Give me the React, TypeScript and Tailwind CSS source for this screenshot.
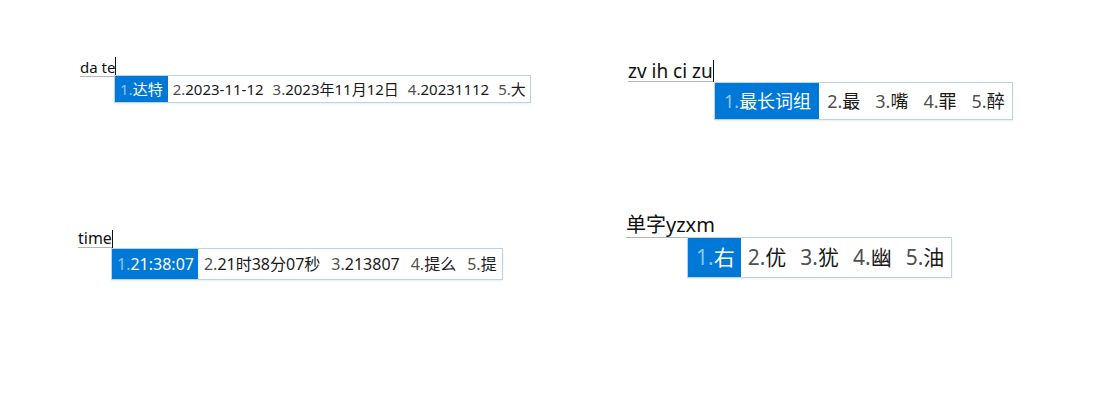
import React from "react";

interface Candidate {
  n: string;
  text: string;
}

interface PanelProps {
  comp: string;
  caret: boolean;
  compClass: string;
  lineClass: string;
  boxClass: string;
  itemClass: string;
  firstClass: string;
  candidates: Candidate[];
}

const font = { fontFamily: '"Noto Sans", "Noto Sans CJK SC", sans-serif' };

function Panel({
  comp,
  caret,
  compClass,
  lineClass,
  boxClass,
  itemClass,
  firstClass,
  candidates,
}: PanelProps) {
  return (
    <div className="flex flex-col items-start" style={font}>
      <div className={`flex items-end ${lineClass}`}>
        <span className={`border-b border-[#b5b5b5] text-[#111] leading-none ${compClass}`}>
          {comp}
        </span>
        {caret && <span className="w-px self-stretch bg-[#111]" />}
      </div>
      <div
        className={`flex items-stretch border border-[#bcd3e6] bg-white shadow-[0_1px_2px_rgba(0,0,0,0.08)] ${boxClass}`}
      >
        {candidates.map((c, i) => (
          <div
            key={c.n}
            className={`flex items-center whitespace-nowrap ${
              i === 0 ? `bg-[#0078d7] text-white ${firstClass}` : `text-[#1a1a1a] ${itemClass}`
            }`}
          >
            <span className={i === 0 ? "text-[#8fc6f2]" : "text-[#505050]"}>{c.n}.</span>
            <span>{c.text}</span>
          </div>
        ))}
      </div>
    </div>
  );
}

export default function App() {
  return (
    <div className="w-[1120px] h-[420px] bg-white flex">
      {/* left column */}
      <div className="w-[548px] flex flex-col pl-[80px]">
        <div className="mt-[57px]">
          <Panel
            comp="da te"
            caret
            compClass="text-[15px] pb-[1px]"
            lineClass="h-[20px]"
            boxClass="ml-[34px] -mt-[2px] h-[28px] text-[15px]"
            itemClass="pl-[5px] pr-[4px]"
            firstClass="px-[5px]"
            candidates={[
              { n: "1", text: "达特" },
              { n: "2", text: "2023-11-12" },
              { n: "3", text: "2023年11月12日" },
              { n: "4", text: "20231112" },
              { n: "5", text: "大" },
            ]}
          />
        </div>
        <div className="mt-[127px] -ml-[2px]">
          <Panel
            comp="time"
            caret
            compClass="text-[16px] pb-[1px]"
            lineClass="h-[18px]"
            boxClass="ml-[33px] h-[32px] text-[16px]"
            itemClass="pl-[6px] pr-[5px]"
            firstClass="pl-[5px] pr-[4px]"
            candidates={[
              { n: "1", text: "21:38:07" },
              { n: "2", text: "21时38分07秒" },
              { n: "3", text: "213807" },
              { n: "4", text: "提么" },
              { n: "5", text: "提" },
            ]}
          />
        </div>
      </div>
      {/* right column */}
      <div className="flex-1 flex flex-col pl-[80px]">
        <div className="mt-[60px]">
          <Panel
            comp="zv ih ci zu"
            caret
            compClass="text-[19px]"
            lineClass="h-[22px]"
            boxClass="ml-[86px] h-[38px] text-[18px]"
            itemClass="pl-[8px] pr-[7px]"
            firstClass="pl-[9px] pr-[8px]"
            candidates={[
              { n: "1", text: "最长词组" },
              { n: "2", text: "最" },
              { n: "3", text: "嘴" },
              { n: "4", text: "罪" },
              { n: "5", text: "醉" },
            ]}
          />
        </div>
        <div className="mt-[94px] -ml-[2px]">
          <Panel
            comp="单字yzxm"
            caret={false}
            compClass="text-[20px] pb-[2px]"
            lineClass="h-[24px]"
            boxClass="ml-[61px] -mt-[1px] h-[41px] text-[21px]"
            itemClass="px-[7px]"
            firstClass="pl-[8px] pr-[6px]"
            candidates={[
              { n: "1", text: "右" },
              { n: "2", text: "优" },
              { n: "3", text: "犹" },
              { n: "4", text: "幽" },
              { n: "5", text: "油" },
            ]}
          />
        </div>
      </div>
    </div>
  );
}
